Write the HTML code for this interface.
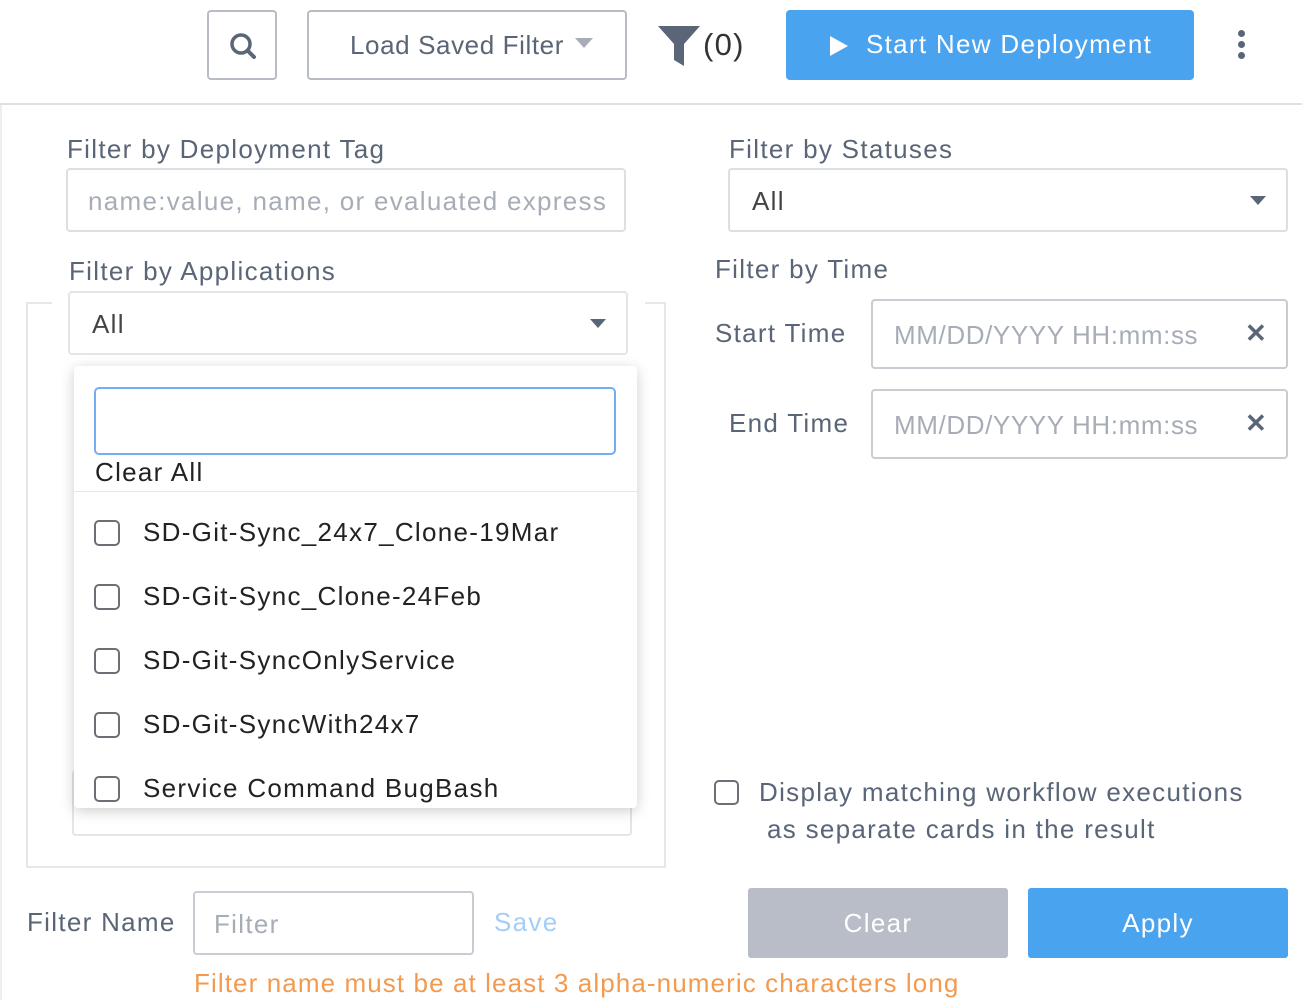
<!DOCTYPE html>
<html><head><meta charset="utf-8"><style>
*{box-sizing:border-box;margin:0;padding:0}
body{width:1302px;height:1000px;background:#fff;font-family:"Liberation Sans",sans-serif;color:#5a6577;position:relative;overflow:hidden;letter-spacing:1.3px}
.a{position:absolute}
.box{position:absolute;border:2px solid #c9ccd3;border-radius:4px;background:#fff}
.lbl{position:absolute;font-size:26px;color:#5a6577;white-space:nowrap}
.ph{color:#a7adb7}
.cb{position:absolute;width:26px;height:26px;border:2px solid #6b6f76;border-radius:5px}
.item{position:absolute;left:143px;font-size:26px;color:#222;white-space:nowrap}
</style></head><body>
<div class="box" style="left:207px;top:10px;width:70px;height:70px;border-color:#b8bcc4">
<svg class="a" style="left:19px;top:19px" width="30" height="30" viewBox="0 0 30 30"><circle cx="13" cy="13" r="9" fill="none" stroke="#5a6577" stroke-width="3.5"/><line x1="19.5" y1="19.5" x2="26" y2="26" stroke="#5a6577" stroke-width="4" stroke-linecap="round"/></svg></div>
<div class="box" style="left:307px;top:10px;width:320px;height:70px;border-color:#b8bcc4"><span class="a" style="left:41px;top:18px;font-size:26px;white-space:nowrap;letter-spacing:0.6px">Load Saved Filter</span><svg class="a" style="left:266px;top:26px" width="18" height="10"><path d="M0 0H18L9 10Z" fill="#a7adb7"/></svg></div>
<svg class="a" style="left:658px;top:26px" width="42" height="42" viewBox="0 0 42 42"><path d="M0 0H42L26 18V40L16 34V18Z" fill="#5a6577"/></svg>
<div class="lbl" style="left:703px;top:27px;font-size:31px;color:#333">(0)</div>
<div class="a" style="left:786px;top:10px;width:408px;height:70px;background:#4aa3ef;border-radius:4px"><svg class="a" style="left:44px;top:26px" width="18" height="20"><path d="M0 0L18 10L0 20Z" fill="#fff"/></svg><span class="a" style="left:80px;top:19px;font-size:26px;color:#fff;white-space:nowrap">Start New Deployment</span></div>
<div class="a" style="left:1238px;top:30px;width:7px;height:7px;border-radius:50%;background:#5a6577"></div>
<div class="a" style="left:1238px;top:41px;width:7px;height:7px;border-radius:50%;background:#5a6577"></div>
<div class="a" style="left:1238px;top:52px;width:7px;height:7px;border-radius:50%;background:#5a6577"></div>
<div class="a" style="left:0;top:103px;width:1302px;height:2px;background:#dde0e5"></div>
<div class="a" style="left:0;top:105px;width:2px;height:895px;background:#eceef1"></div>

<div class="lbl" style="left:67px;top:134px">Filter by Deployment Tag</div>
<div class="box" style="left:66px;top:168px;width:560px;height:64px;border-color:#dcdfe3"><span class="a ph" style="left:20px;top:16px;font-size:26px;white-space:nowrap;overflow:hidden;width:520px">name:value, name, or evaluated expression</span></div>
<div class="lbl" style="left:69px;top:256px">Filter by Applications</div>
<div class="a" style="left:26px;top:302px;width:640px;height:566px;border:2px solid #e5e7eb"></div>
<div class="a" style="left:52px;top:296px;width:593px;height:14px;background:#fff"></div>
<div class="box" style="left:68px;top:291px;width:560px;height:64px;border-color:#e3e5e9"><span class="a" style="left:22px;top:16px;font-size:26px;color:#444">All</span><svg class="a" style="left:520px;top:26px" width="16" height="9"><path d="M0 0H16L8 9Z" fill="#5a6577"/></svg></div>
<div class="box" style="left:72px;top:770px;width:560px;height:66px;border-color:#e3e5e9"></div>
<div class="a" style="left:74px;top:366px;width:563px;height:442px;background:#fff;border-radius:4px;box-shadow:0 3px 14px rgba(0,0,0,.2)">
<div class="a" style="left:20px;top:21px;width:522px;height:68px;border:2px solid #74aef0;border-radius:5px"></div>
<div class="a" style="left:21px;top:91px;font-size:26px;color:#222">Clear All</div>
<div class="a" style="left:0;top:125px;width:563px;height:1px;background:#e5e7eb"></div>
</div>
<div class="cb" style="left:94px;top:520px"></div><div class="item" style="top:517px">SD-Git-Sync_24x7_Clone-19Mar</div>
<div class="cb" style="left:94px;top:584px"></div><div class="item" style="top:581px">SD-Git-Sync_Clone-24Feb</div>
<div class="cb" style="left:94px;top:648px"></div><div class="item" style="top:645px">SD-Git-SyncOnlyService</div>
<div class="cb" style="left:94px;top:712px"></div><div class="item" style="top:709px">SD-Git-SyncWith24x7</div>
<div class="cb" style="left:94px;top:776px"></div><div class="item" style="top:773px">Service Command BugBash</div>

<div class="lbl" style="left:729px;top:134px">Filter by Statuses</div>
<div class="box" style="left:728px;top:168px;width:560px;height:64px;border-color:#dcdfe3"><span class="a" style="left:22px;top:16px;font-size:26px;color:#444">All</span><svg class="a" style="left:520px;top:26px" width="16" height="9"><path d="M0 0H16L8 9Z" fill="#5a6577"/></svg></div>
<div class="lbl" style="left:715px;top:254px">Filter by Time</div>
<div class="lbl" style="left:715px;top:318px">Start Time</div>
<div class="box" style="left:871px;top:299px;width:417px;height:70px"><span class="a ph" style="left:21px;top:19px;font-size:26px;white-space:nowrap;letter-spacing:0.6px">MM/DD/YYYY HH:mm:ss</span><span class="a" style="left:372px;top:17px;font-size:26px;color:#5a6577;font-weight:bold">✕</span></div>
<div class="lbl" style="left:729px;top:408px">End Time</div>
<div class="box" style="left:871px;top:389px;width:417px;height:70px"><span class="a ph" style="left:21px;top:19px;font-size:26px;white-space:nowrap;letter-spacing:0.6px">MM/DD/YYYY HH:mm:ss</span><span class="a" style="left:372px;top:17px;font-size:26px;color:#5a6577;font-weight:bold">✕</span></div>
<div class="cb" style="left:714px;top:780px;width:25px;height:25px"></div>
<div class="lbl" style="left:759px;top:777px">Display matching workflow executions</div>
<div class="lbl" style="left:767px;top:814px">as separate cards in the result</div>

<div class="lbl" style="left:27px;top:907px">Filter Name</div>
<div class="box" style="left:193px;top:891px;width:281px;height:64px"><span class="a ph" style="left:19px;top:16px;font-size:26px">Filter</span></div>
<div class="lbl" style="left:494px;top:907px;color:#a3cef5">Save</div>
<div class="a" style="left:748px;top:888px;width:260px;height:70px;background:#b8bdc7;border-radius:3px;color:#fff;font-size:26px;text-align:center;line-height:70px">Clear</div>
<div class="a" style="left:1028px;top:888px;width:260px;height:70px;background:#4aa3ef;border-radius:3px;color:#fff;font-size:26px;text-align:center;line-height:70px">Apply</div>
<div class="lbl" style="left:194px;top:968px;color:#f39a4f;letter-spacing:1.1px">Filter name must be at least 3 alpha-numeric characters long</div>
</body></html>
